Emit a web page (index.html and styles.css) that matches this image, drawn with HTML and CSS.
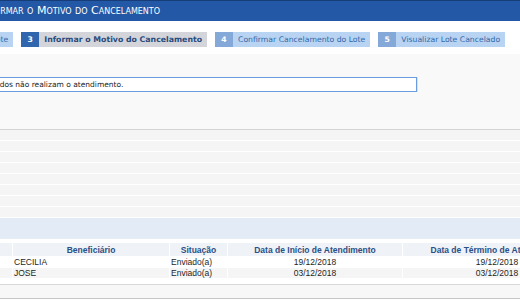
FILE: index.html
```html
<!DOCTYPE html>
<html lang="pt-BR">

<head>
    <meta charset="UTF-8">
    <title>Cancelar Lote - Informar o Motivo do Cancelamento</title>
    <link rel="stylesheet" href="styles.css">
</head>

<body>
    <div class="page">
        <!-- Titulo -->
        <div class="titlebar">
            <h1>Informar o Motivo do Cancelamento</h1>
        </div>

        <!-- Passos -->
        <div class="steps-area">
            <div class="steps">
                <div class="step done"><span class="num">1</span><span class="label">Pesquisar Lote</span></div>
                <div class="step done"><span class="num">2</span><span class="label">Selecionar Lote</span></div>
                <div class="step current"><span class="num">3</span><span class="label">Informar o Motivo do Cancelamento</span></div>
                <div class="step"><span class="num">4</span><span class="label">Confirmar Cancelamento do Lote</span></div>
                <div class="step"><span class="num">5</span><span class="label">Visualizar Lote Cancelado</span></div>
            </div>
        </div>

        <!-- Motivo -->
        <div class="form-area">
            <div class="form-row">
                <label class="form-label" for="motivo">Motivo:</label>
                <input id="motivo" class="form-input" type="text" value="Os prestadores credenciados não realizam o atendimento.">
            </div>
        </div>

        <div class="stripes">
            <div class="stripe"></div>
            <div class="stripe"></div>
            <div class="stripe"></div>
            <div class="stripe"></div>
            <div class="stripe"></div>
            <div class="stripe"></div>
            <div class="stripe"></div>
            <div class="stripe"></div>
        </div>

        <!-- Guias do lote -->
        <div class="section-bar">Guias do Lote</div>

        <table class="grid">
            <colgroup>
                <col class="c-guia">
                <col class="c-benef">
                <col class="c-sit">
                <col class="c-data">
                <col class="c-data2">
            </colgroup>
            <thead>
                <tr>
                    <th>Nº Guia</th>
                    <th>Beneficiário</th>
                    <th>Situação</th>
                    <th>Data de Início de Atendimento</th>
                    <th>Data de Término de Atendimento</th>
                </tr>
            </thead>
            <tbody>
                <tr>
                    <td class="center">1208754</td>
                    <td>CECILIA</td>
                    <td>Enviado(a)</td>
                    <td class="center">19/12/2018</td>
                    <td class="center">19/12/2018</td>
                </tr>
                <tr class="odd">
                    <td class="center">1208761</td>
                    <td>JOSE</td>
                    <td>Enviado(a)</td>
                    <td class="center">03/12/2018</td>
                    <td class="center">03/12/2018</td>
                </tr>
            </tbody>
        </table>

        <div class="footer-bar"></div>
    </div>
</body>

</html>
```

FILE: styles.css
```css
* {
    box-sizing: border-box;
    margin: 0;
    padding: 0;
}

body {
    font-family: Tahoma, "DejaVu Sans", sans-serif;
    background-color: #fff;
    color: #222;
    overflow: hidden;
}

.page {
    width: 900px;
    margin-left: -200px;
}

.titlebar {
    height: 21px;
    background-color: #2258a5;
    border-top: 1px solid #173d78;
    padding-left: 180px;
}

.titlebar h1 {
    color: #fff;
    font-size: 11px;
    font-weight: normal;
    font-variant: small-caps;
    line-height: 20px;
}

.steps-area {
    height: 33px;
    padding-top: 11px;
    padding-left: 34px;
}

.steps {
    display: flex;
    gap: 8px;
}

.step {
    display: flex;
    height: 15px;
    font-size: 7.7px;
    line-height: 15px;
}

.step .num {
    width: 18px;
    text-align: center;
    font-weight: bold;
    color: #fff;
    background-color: #84a8d8;
}

.step .label {
    padding: 0 5px;
    color: #3468a7;
    background-color: #b9d4f2;
}

.step.current .num {
    background-color: #2f66ad;
}

.step.current .label {
    background-color: #d4d5da;
    color: #294b7d;
    font-weight: bold;
    font-size: 7.8px;
}

.form-area {
    height: 76px;
    background-color: #f9f9f9;
    border-bottom: 1px solid #d4d4d4;
    padding-top: 23px;
}

.form-row {
    display: flex;
    align-items: center;
}

.form-label {
    width: 101px;
    padding-left: 40px;
    font-size: 7.5px;
    color: #294b7d;
    font-weight: bold;
}

.form-input {
    width: 516px;
    height: 15px;
    border: 1px solid #6b9be0;
    box-shadow: 1px 0 0 #d2e2f8;
    padding: 0 2px;
    font-family: Tahoma, "DejaVu Sans", sans-serif;
    font-size: 7.5px;
    color: #222;
    background-color: #fff;
    outline: none;
}

.stripe {
    height: 11px;
    background-color: #f5f5f5;
    border-bottom: 1px solid #fff;
}

.section-bar {
    height: 21px;
    background-color: #e3ebf6;
    padding-left: 10px;
    font-size: 8px;
    line-height: 21px;
    font-weight: bold;
    color: #294b7d;
    margin-bottom: 3px;
}

.grid {
    margin-left: 139px;
    border-collapse: separate;
    border-spacing: 1px;
    table-layout: fixed;
    width: 653px;
    font-family: "Liberation Sans", Arial, sans-serif;
    font-size: 8.5px;
    margin-bottom: 5px;
}

.c-guia { width: 72px; }
.c-benef { width: 156px; }
.c-sit { width: 57px; }
.c-data { width: 174px; }
.c-data2 { width: 188px; }

.grid th {
    height: 13px;
    background-color: #eff2f7;
    color: #2b4f86;
    font-weight: bold;
    text-align: center;
    white-space: nowrap;
    overflow: hidden;
}

.grid td {
    height: 10px;
    padding: 0 1px;
    line-height: 10px;
    color: #1e1e1e;
    white-space: nowrap;
}

.grid td.center {
    text-align: center;
}

.grid tr.odd td {
    background-color: #f5f5f5;
}

.footer-bar {
    height: 15px;
    background-color: #f7f7f7;
    border-top: 1px solid #d8d8d8;
    border-bottom: 1px solid #c6c6c6;
}
```
